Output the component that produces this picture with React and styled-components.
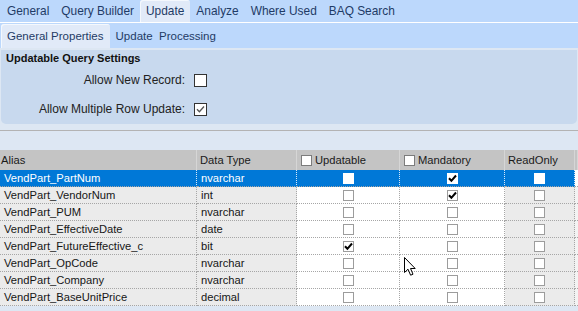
import React from 'react';
import styled, { createGlobalStyle } from 'styled-components';

const GlobalStyle = createGlobalStyle`
  html, body {
    margin: 0;
    padding: 0;
  }
  body {
    background: #dde7f3;
    font-family: "Liberation Sans", Arial, sans-serif;
  }
`;

const Screen = styled.div`
  width: 578px;
  height: 311px;
  display: flex;
  flex-direction: column;
  background: #dde7f3;
  overflow: hidden;
`;

const TabStrip = styled.div`
  display: flex;
  align-items: stretch;
  flex: none;
  height: ${p => p.$height}px;
  padding-left: ${p => p.$inset}px;
  background: #bcd8fc;
  border-bottom: ${p => (p.$divider ? '1px solid #ffffff' : 'none')};
`;

const Tab = styled.div`
  display: flex;
  align-items: center;
  padding: 0 ${p => p.$padX}px;
  margin-top: ${p => p.$offset || 0}px;
  font-size: ${p => p.$size}px;
  color: #1f3b66;
  white-space: pre;
  background: ${p => (p.$active ? '#e1eaf8' : 'transparent')};
  border-radius: 3px 3px 0 0;
  box-shadow: ${p => (p.$active ? 'inset 1px 1px 0 #f4f8fd' : 'none')};
`;

const Panel = styled.div`
  margin: 2px 1px 0;
  padding: 1px 5px 8px;
  background: #c8d9ee;
  border-radius: 0 0 5px 5px;
`;

const PanelTitle = styled.div`
  font-size: 11px;
  font-weight: bold;
  line-height: 14px;
  color: #111;
`;

const SettingsGrid = styled.div`
  display: grid;
  grid-template-columns: 179px 13px;
  column-gap: 9px;
  row-gap: 16px;
  margin-top: 9px;
  align-items: center;
`;

const SettingLabel = styled.div`
  text-align: right;
  font-size: 12px;
  color: #222;
  line-height: 13px;
`;

const PanelBox = styled.div`
  width: 13px;
  height: 13px;
  box-sizing: border-box;
  border: 1px solid #333;
  background: #fff;
  display: flex;
  align-items: center;
  justify-content: center;
`;

const Toolbar = styled.div`
  flex: none;
  margin-top: 6px;
  height: 19px;
  border-top: 1px solid #b3b3b3;
`;

const Table = styled.div`
  position: relative;
  display: grid;
  grid-template-columns: 197px 100px 103px 105px 70px 1fr;
  grid-template-rows: 20px;
  grid-auto-rows: 17px;
  font-size: 11.2px;
`;

const HeadCell = styled.div`
  display: flex;
  align-items: center;
  padding-left: ${p => p.$pad}px;
  background: #c4c4c4;
  color: #1a1a1a;
  border-right: 1px solid #d6d6d6;
  white-space: nowrap;
  overflow: hidden;
`;

const Cell = styled.div`
  display: flex;
  align-items: center;
  justify-content: ${p => (p.$center ? 'center' : 'flex-start')};
  padding-left: ${p => (p.$center ? 0 : 4)}px;
  background: ${p => (p.$selected ? '#0078d7' : p.$white ? '#ffffff' : '#ebebeb')};
  color: ${p => (p.$selected ? '#ffffff' : '#161616')};
  border-right: 1px dotted ${p => (p.$selected ? '#d8e9f8' : '#a6a6a6')};
  border-bottom: 1px dotted #a6a6a6;
  white-space: nowrap;
  overflow: hidden;
`;

const Filler = styled.div`
  background: ${p => (p.$selected ? '#ffffff' : '#f3f3f3')};
  border-bottom: 1px dotted #a6a6a6;
`;

const GridBox = styled.div`
  width: 11px;
  height: 11px;
  box-sizing: border-box;
  border: 1px solid ${p => (p.$selected ? '#ffffff' : p.$dark ? '#7c7c7c' : '#9c9c9c')};
  background: #fff;
  margin-right: ${p => (p.$gap ? 3 : 0)}px;
  display: flex;
  align-items: center;
  justify-content: center;
  flex: none;
`;

const Cursor = styled.svg`
  position: absolute;
  left: 404px;
  top: 107px;
`;

const Check = ({ color = '#000', width = 2 }) => (
  <svg width="9" height="9" viewBox="0 0 9 9">
    <path d="M1 4.2 L3.4 6.8 L8 1.5" fill="none" stroke={color} strokeWidth={width} />
  </svg>
);

const topTabs = ['General', 'Query Builder', 'Update', 'Analyze', 'Where Used', 'BAQ Search'];

const rows = [
  { alias: 'VendPart_PartNum', type: 'nvarchar', upd: false, man: true },
  { alias: 'VendPart_VendorNum', type: 'int', upd: false, man: true },
  { alias: 'VendPart_PUM', type: 'nvarchar', upd: false, man: false },
  { alias: 'VendPart_EffectiveDate', type: 'date', upd: false, man: false },
  { alias: 'VendPart_FutureEffective_c', type: 'bit', upd: true, man: false },
  { alias: 'VendPart_OpCode', type: 'nvarchar', upd: false, man: false },
  { alias: 'VendPart_Company', type: 'nvarchar', upd: false, man: false },
  { alias: 'VendPart_BaseUnitPrice', type: 'decimal', upd: false, man: false },
];

const App = () => {
  return (
    <>
      <GlobalStyle />
      <Screen>
        <TabStrip $height={22} $inset={1} $divider>
          {topTabs.map(t => (
            <Tab key={t} $size={11.9} $padX={6} $active={t === 'Update'}>{t}</Tab>
          ))}
        </TabStrip>
        <TabStrip $height={25} $inset={1}>
          <Tab $size={11.5} $padX={6} $offset={1} $active>General Properties</Tab>
          <Tab $size={11.5} $padX={6} $offset={1}>{'Update\u00a0 Processing'}</Tab>
        </TabStrip>

        <Panel>
          <PanelTitle>Updatable Query Settings</PanelTitle>
          <SettingsGrid>
            <SettingLabel>Allow New Record:</SettingLabel>
            <PanelBox />
            <SettingLabel>Allow Multiple Row Update:</SettingLabel>
            <PanelBox><Check color="#555" width={1.3} /></PanelBox>
          </SettingsGrid>
        </Panel>

        <Toolbar />

        <Table>
          <HeadCell $pad={1}>Alias</HeadCell>
          <HeadCell $pad={3}>Data Type</HeadCell>
          <HeadCell $pad={4}><GridBox $dark $gap />Updatable</HeadCell>
          <HeadCell $pad={4}><GridBox $dark $gap />Mandatory</HeadCell>
          <HeadCell $pad={3}>ReadOnly</HeadCell>
          <HeadCell $pad={0} />

          {rows.map((r, i) => {
            const sel = i === 0;
            return (
              <React.Fragment key={r.alias}>
                <Cell $selected={sel}>{r.alias}</Cell>
                <Cell $selected={sel}>{r.type}</Cell>
                <Cell $selected={sel} $white $center>
                  <GridBox $selected={sel}>{r.upd && <Check />}</GridBox>
                </Cell>
                <Cell $selected={sel} $white $center>
                  <GridBox $selected={sel}>{r.man && <Check />}</GridBox>
                </Cell>
                <Cell $selected={sel} $center>
                  <GridBox $selected={sel} />
                </Cell>
                <Filler $selected={sel} />
              </React.Fragment>
            );
          })}

          <Cursor width="13" height="20" viewBox="0 0 13 20">
            <path
              d="M0.5 0.5 L0.5 15.5 L4 12.2 L6.6 18.2 L9 17.2 L6.5 11.5 L11.2 11.5 Z"
              fill="#fff"
              stroke="#000"
              strokeWidth="1"
              strokeLinejoin="miter"
            />
          </Cursor>
        </Table>
      </Screen>
    </>
  );
};

export default App;
